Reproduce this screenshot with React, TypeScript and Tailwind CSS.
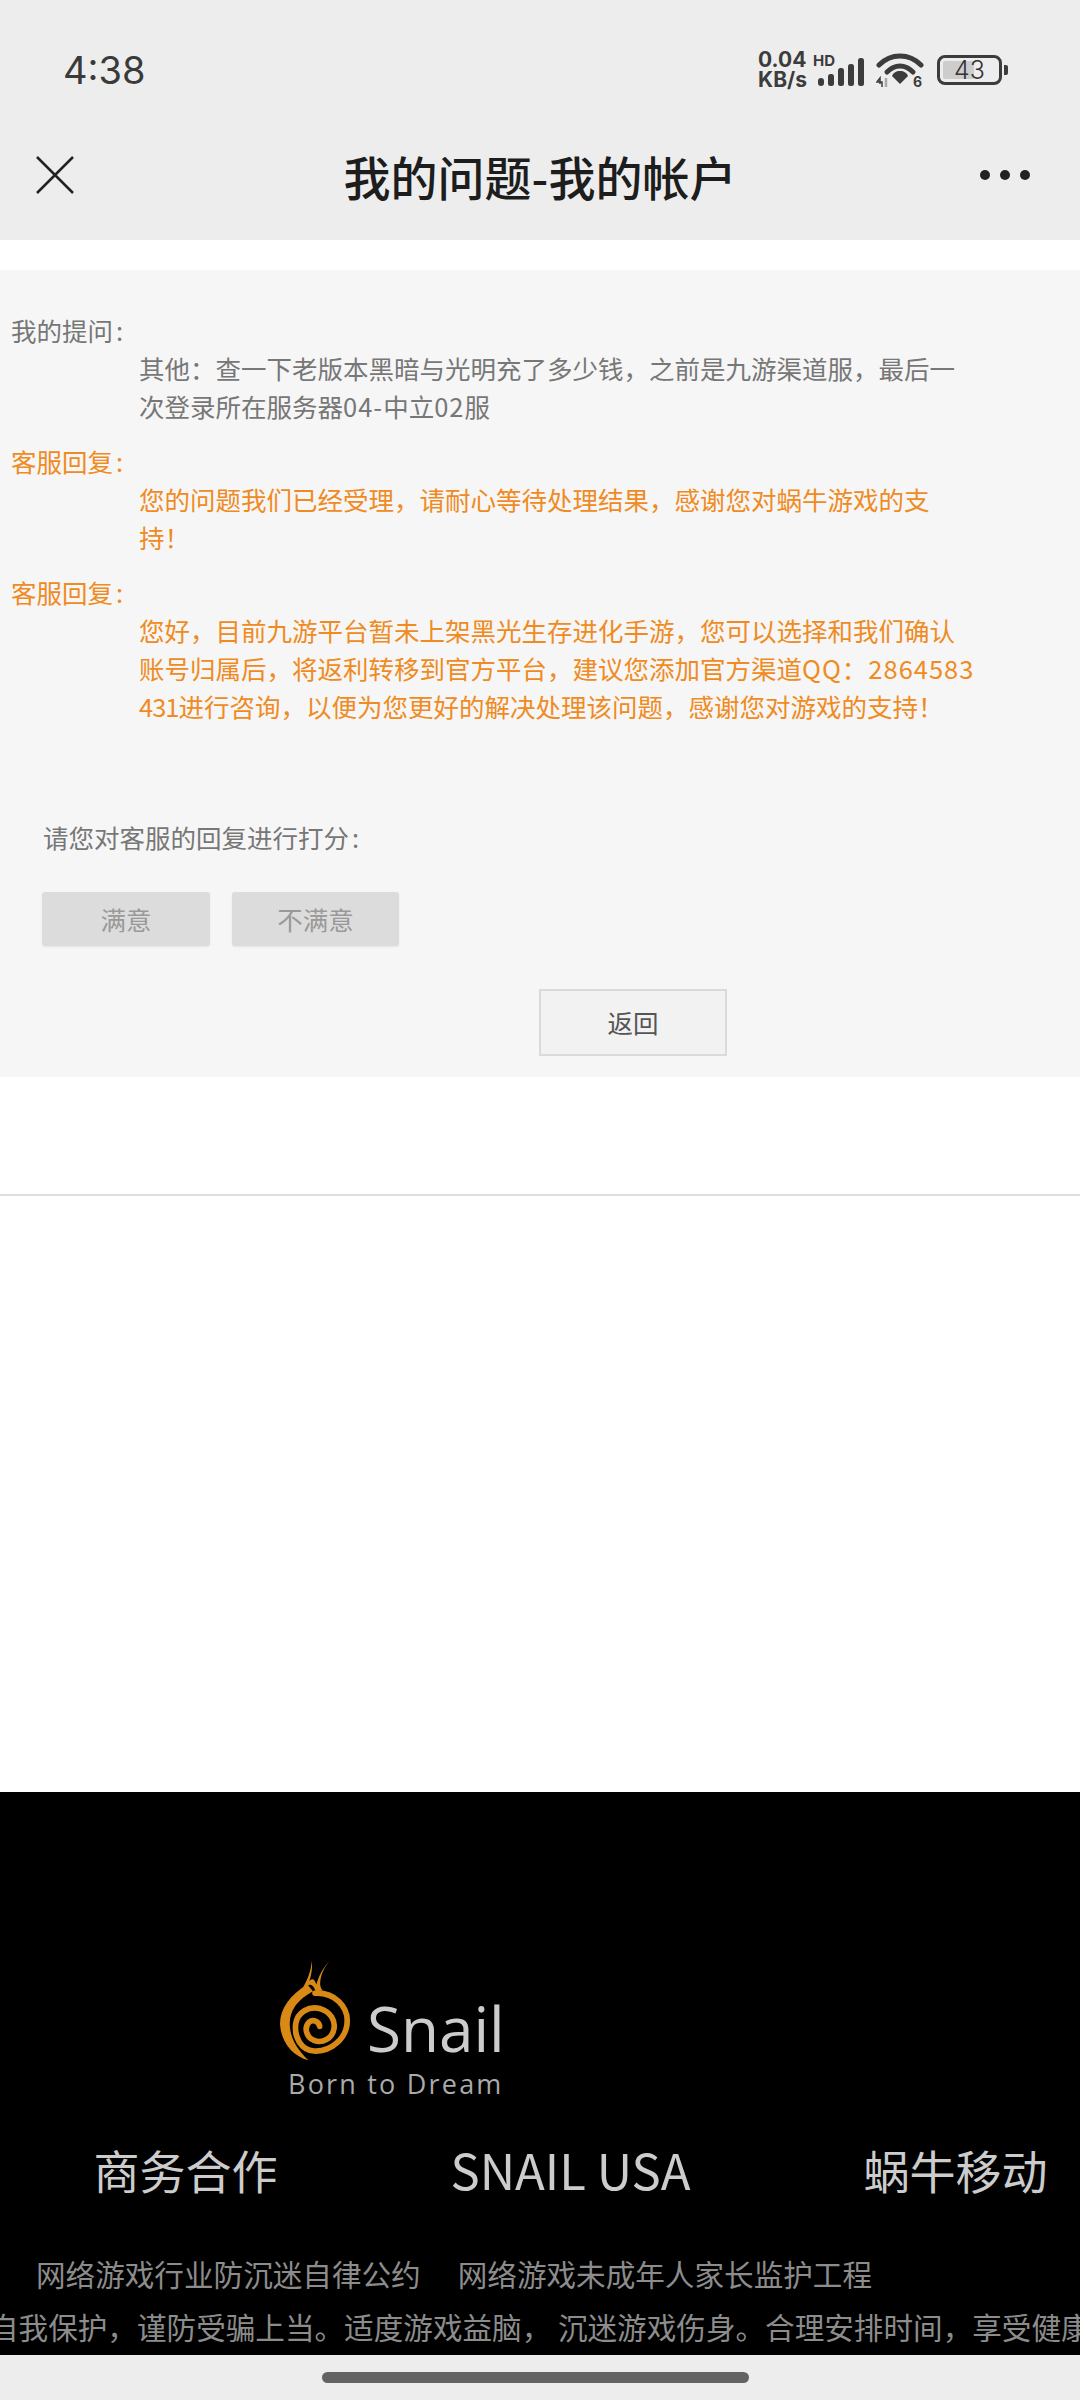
import type { ReactNode } from "react";

const cjk = "font-['Noto_Sans_CJK_SC','Noto_Sans',sans-serif]";

function StatusIcons() {
  return (
    <div className="flex items-center">
      <div className="flex flex-col font-['Inter',sans-serif] text-[21px] leading-[20px] font-bold text-[#3c3c3c]">
        <span>0.04</span>
        <span>KB/s</span>
      </div>
      <svg width="54" height="36" viewBox="0 0 54 36" className="ml-[6px]">
        <text x="0" y="14" fontFamily="Inter, sans-serif" fontSize="15" fontWeight="700" fill="#3c3c3c">HD</text>
        <rect x="5" y="26" width="6" height="8" rx="3" fill="#3c3c3c" />
        <rect x="15" y="22" width="6" height="12" rx="2.5" fill="#3c3c3c" />
        <rect x="25" y="16" width="6" height="18" rx="2.5" fill="#3c3c3c" />
        <rect x="35" y="12" width="6" height="22" rx="2.5" fill="#3c3c3c" />
        <rect x="45" y="6" width="6" height="28" rx="2.5" fill="#3c3c3c" />
      </svg>
      <svg width="50" height="36" viewBox="0 0 50 36" className="ml-[9px]">
        <path d="M3 13C15 1 33 1 45 13" fill="none" stroke="#3c3c3c" strokeWidth="5" strokeLinecap="round" />
        <path d="M11 20C19 12 29 12 37 20" fill="none" stroke="#3c3c3c" strokeWidth="5" strokeLinecap="round" />
        <path d="M24 19C20 19 17 21 16 24L24 32L32 24C31 21 28 19 24 19Z" fill="#3c3c3c" />
        <path d="M4 32V26L1 30H6V35" fill="none" stroke="#3c3c3c" strokeWidth="1.5" />
        <path d="M10 35V26" stroke="#aaaaaa" strokeWidth="2.5" />
        <text x="37" y="35" fontFamily="Inter, sans-serif" fontSize="14" fontWeight="700" fill="#3c3c3c">6</text>
      </svg>
      <div className="ml-[11px] flex items-center">
        <div className="relative flex h-[30px] w-[65px] items-center justify-center overflow-hidden rounded-[8px] border-[3px] border-[#3c3c3c]">
          <div className="absolute top-[3px] bottom-[3px] left-[3px] w-[31px] rounded-[2px] bg-[#cdcdcd]" />
          <span className="relative font-['Inter',sans-serif] text-[25px] leading-none font-light text-[#333]">43</span>
        </div>
        <div className="ml-[2px] h-[10px] w-[4px] rounded-r-[2px] bg-[#3c3c3c]" />
      </div>
    </div>
  );
}

function Header() {
  return (
    <header className="flex flex-col bg-[#ededed] pb-[30px]">
      <div className="flex h-[140px] items-center justify-between pr-[72px] pl-[63px]">
        <span className="font-['Inter',sans-serif] text-[38px] font-normal text-[#3a3a3a]">4:38</span>
        <StatusIcons />
      </div>
      <div className="grid h-[70px] grid-cols-[1fr_auto_1fr] items-center pr-[36px] pl-[36px]">
        <svg width="38" height="38" viewBox="0 0 38 38">
          <path d="M1 1L37 37M37 1L1 37" stroke="#222" strokeWidth="2.5" fill="none" />
        </svg>
        <h1 className={`${cjk} text-[47px] leading-none font-medium text-[#1d1d1d]`}>我的问题-我的帐户</h1>
        <div className="mr-[14px] flex justify-end gap-[10px]">
          <div className="size-[10px] rounded-full bg-[#222]" />
          <div className="size-[10px] rounded-full bg-[#222]" />
          <div className="size-[10px] rounded-full bg-[#222]" />
        </div>
      </div>
    </header>
  );
}

function Entry({ label, children, orange }: { label: string; children: ReactNode; orange?: boolean }) {
  const color = orange ? "text-[#ef8b22]" : "text-[#777777]";
  return (
    <div className={`${color} text-[25.5px] leading-[38px]`}>
      <div className="pl-[11px]">
        {label}
        <span className="ml-[3px]">:</span>
      </div>
      <p className="ml-[139px] w-[837px] break-all">{children}</p>
    </div>
  );
}

function Panel() {
  return (
    <section className={`${cjk} mt-[30px] bg-[#f6f6f6] pt-[41px] pb-[21px]`}>
      <div className="flex flex-col gap-[17px]">
        <Entry label="我的提问">
          其他：查一下老版本黑暗与光明充了多少钱，之前是九游渠道服，最后一次登录所在服务器<span className="tracking-[1px]">04-</span>中立<span className="tracking-[1px]">02</span>服
        </Entry>
        <Entry orange label="客服回复">
          您的问题我们已经受理，请耐心等待处理结果，感谢您对蜗牛游戏的支持！
        </Entry>
        <Entry orange label="客服回复">
          您好，目前九游平台暂未上架黑光生存进化手游，您可以选择和我们确认账号归属后，将返利转移到官方平台，建议您添加官方渠道<span className="tracking-[1px]">QQ：2864583</span><span className="tracking-[-1px]">431</span>进行咨询，以便为您更好的解决处理该问题，感谢您对游戏的支持！
        </Entry>
      </div>
      <p className="mt-[93px] pl-[43px] text-[25.5px] leading-[38px] text-[#777777]">
        请您对客服的回复进行打分<span className="ml-[3px]">:</span>
      </p>
      <div className="mt-[36px] flex gap-[22px] pl-[42px]">
        <button className="h-[54px] w-[168px] rounded-[3px] bg-[#dcdcdc] text-[25.5px] text-[#999999] shadow-[0_1px_2px_rgba(0,0,0,0.08)]">满意</button>
        <button className="h-[54px] w-[167px] rounded-[3px] bg-[#dcdcdc] text-[25.5px] text-[#999999] shadow-[0_1px_2px_rgba(0,0,0,0.08)]">不满意</button>
      </div>
      <div className="mt-[43px] pl-[539px]">
        <button className="h-[67px] w-[188px] border-2 border-[#dadada] bg-[#f2f2f2] text-[25.5px] text-[#555555]">返回</button>
      </div>
    </section>
  );
}

function SnailLogo() {
  return (
    <div className="flex flex-col pl-[279px] font-['Open_Sans',sans-serif]">
      <div className="flex items-end">
        <svg width="74" height="103" viewBox="120 95 222 310" className="blur-[0.5px]">
          <path d="M205 172C150 205 120 250 123 295C128 352 165 388 208 400C178 370 155 340 152 295C150 250 175 218 222 192Z" fill="#d98a16" />
          <path d="M218 100C216 130 208 155 186 190L204 178C214 168 222 172 230 192L252 190C238 178 240 140 272 100C250 125 240 145 232 172C226 155 220 152 211 162C218 140 221 120 218 100Z" fill="#d98a16" />
          <path d="M228 198C290 195 325 240 325 280C325 335 275 375 225 372C185 368 165 330 170 290C175 255 210 235 245 245C275 255 290 280 285 305C280 335 250 350 225 340C200 330 195 300 210 285C222 275 240 282 242 298" fill="none" stroke="#d98a16" strokeWidth="17" strokeLinecap="round" />
        </svg>
        <span className="mb-[1px] ml-[14px] text-[62px] leading-[66px] font-medium text-[#cccccc]">Snail</span>
      </div>
      <span className="mt-[5px] ml-[9px] text-[27px] leading-[34px] font-medium tracking-[2.2px] text-[#aaaaaa]">Born to Dream</span>
    </div>
  );
}

function Footer() {
  return (
    <footer className={`${cjk} mt-auto h-[563px] overflow-hidden bg-black pt-[167px]`}>
      <SnailLogo />
      <div className="-ml-[7px] mt-[38px] flex items-center text-[46px] leading-[60px] text-[#cccccc]">
        <a className="w-[385px] shrink-0 text-center">商务合作</a>
        <a className="w-[385px] shrink-0 text-center text-[49px]">SNAIL USA</a>
        <a className="w-[385px] shrink-0 text-center">蜗牛移动</a>
      </div>
      <div className="mt-[55px] flex gap-[37px] pl-[36px] text-[29.6px] leading-[40px] text-[#8c8c8c]">
        <span>网络游戏行业防沉迷自律公约</span>
        <span>网络游戏未成年人家长监护工程</span>
      </div>
      <p className="-ml-[11px] mt-[13px] text-[29.6px] leading-[40px] whitespace-nowrap text-[#8c8c8c]">
        自我保护，谨防受骗上当。适度游戏益脑， 沉迷游戏伤身。合理安排时间，享受健康生活。
      </p>
    </footer>
  );
}

export default function App() {
  return (
    <div className="flex h-[2400px] w-[1080px] flex-col overflow-hidden bg-white">
      <Header />
      <Panel />
      <hr className="mt-[117px] border-t-2 border-[#dddddd]" />
      <Footer />
      <div className="flex h-[45px] shrink-0 justify-center bg-[#ededed] pt-[17px] pr-[9px]">
        <div className="h-[11px] w-[427px] rounded-full bg-[#636363]" />
      </div>
    </div>
  );
}
